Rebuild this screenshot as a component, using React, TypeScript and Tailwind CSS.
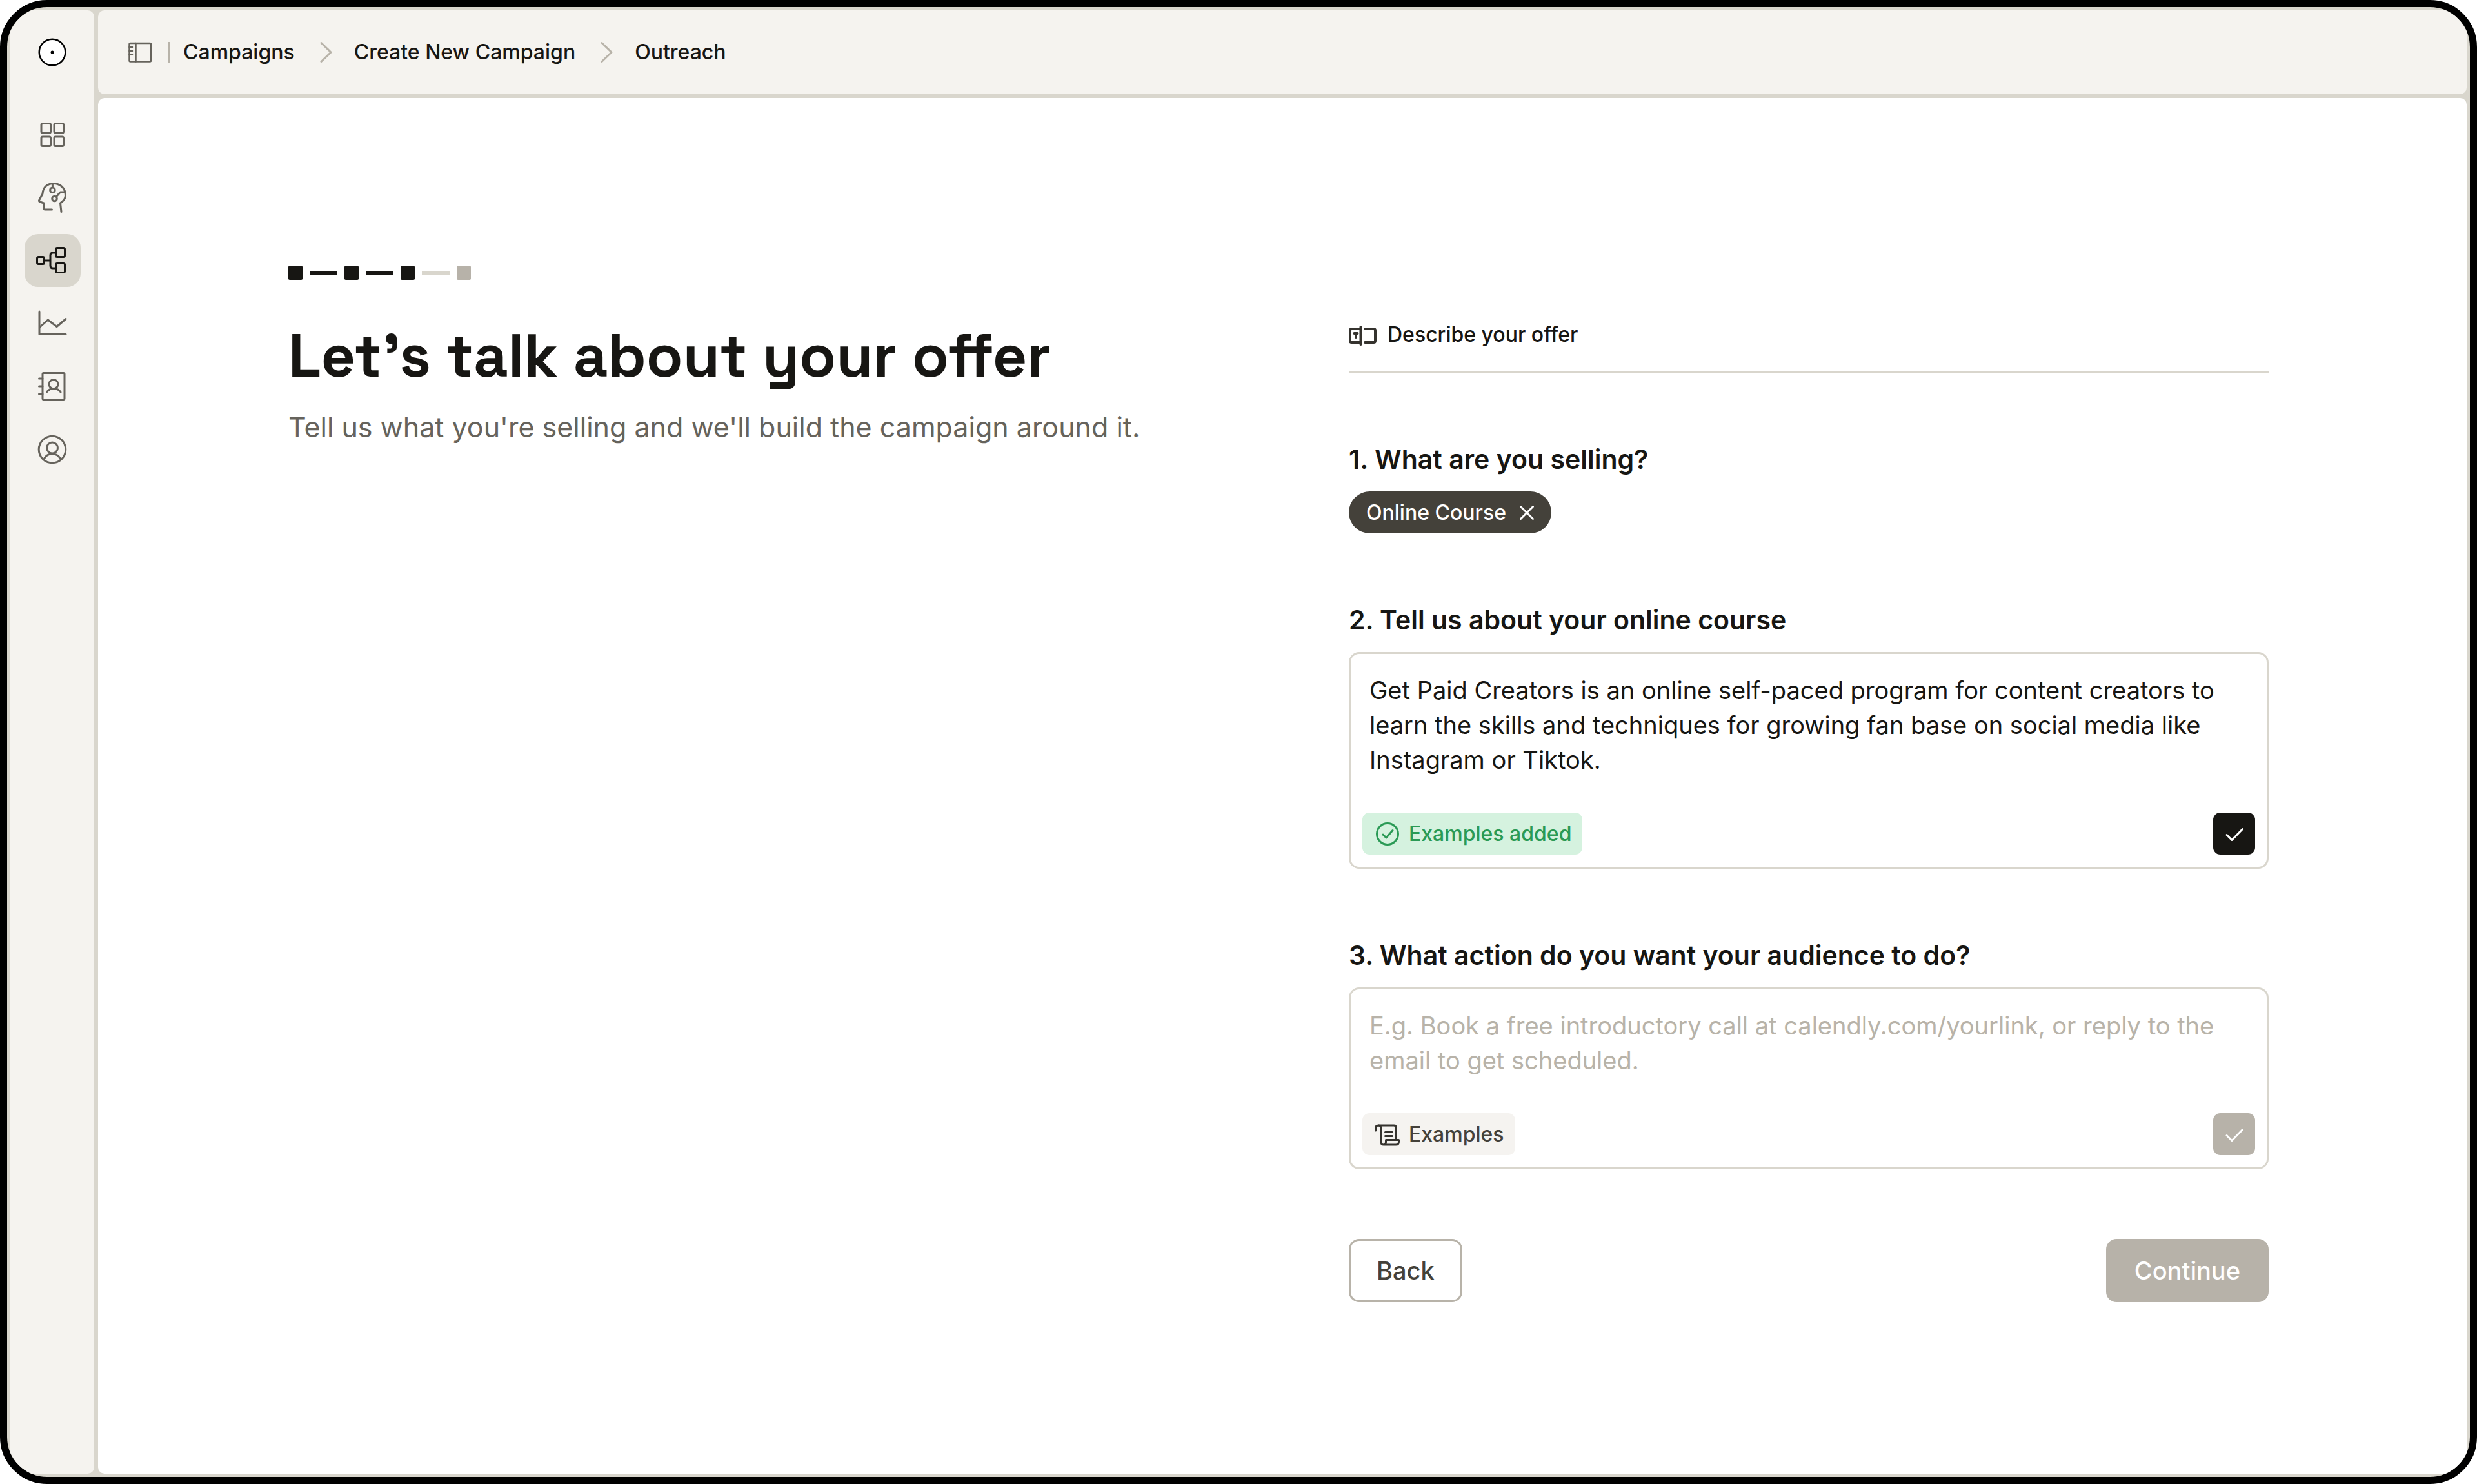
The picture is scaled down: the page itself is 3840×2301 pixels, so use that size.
import type { ReactNode } from "react";

type IconProps = { className?: string; children: ReactNode };

const Icon = ({ className = "", children }: IconProps) => (
  <svg
    xmlns="http://www.w3.org/2000/svg"
    fill="none"
    viewBox="0 0 48 48"
    strokeWidth={3}
    stroke="currentColor"
    strokeLinecap="round"
    strokeLinejoin="round"
    aria-hidden="true"
    className={`size-12 shrink-0 overflow-visible ${className}`}
  >
    {children}
  </svg>
);

const SmallIcon = ({ className = "", children }: IconProps) => (
  <svg
    xmlns="http://www.w3.org/2000/svg"
    fill="none"
    viewBox="0 0 44 44"
    strokeWidth={3}
    stroke="currentColor"
    strokeLinecap="round"
    strokeLinejoin="round"
    aria-hidden="true"
    className={`size-11 shrink-0 ${className}`}
  >
    {children}
  </svg>
);

const navItems = [
  {
    label: "Dashboard",
    icon: (
      <Icon>
        <rect x="7" y="7.5" width="14.5" height="14.5" rx="2" />
        <rect x="27" y="7.5" width="14.5" height="14.5" rx="2" />
        <rect x="7" y="28" width="14.5" height="14.5" rx="2" />
        <rect x="27" y="28" width="14.5" height="14.5" rx="2" />
      </Icon>
    ),
  },
  {
    label: "Intelligence",
    icon: (
      <Icon>
        <path d="M23.5 43H13q-2 0-2-2v-8l-6-2q-2.4-1-1.2-3L9 18.500C9.500 9 16 2.500 26 2.500c10.500 0 18.500 7.500 18.500 18.500 0 5.500-3.500 8.500-8 12L38 46.500" />
        <path d="M24.400 2.500v6.200M30.200 23l6.300-7H44" />
        <circle cx="24.400" cy="12.700" r="3.800" />
        <circle cx="27.500" cy="26" r="3.800" />
      </Icon>
    ),
  },
  {
    label: "Campaigns",
    active: true,
    icon: (
      <Icon>
        <rect x="0.500" y="18.500" width="11" height="11" rx="2" />
        <rect x="29.500" y="4.500" width="14" height="14" rx="2" />
        <rect x="29.500" y="28.500" width="14" height="14" rx="2" />
        <path d="M11.500 24H21M29.500 12H25q-4 0-4 4v16q0 4 4 4h4.500" />
      </Icon>
    ),
  },
  {
    label: "Analytics",
    icon: (
      <Icon>
        <path d="M4 5v35.500h41M5 29l12.300-11L31 28.500 45 16.500" />
      </Icon>
    ),
  },
  {
    label: "Contacts",
    icon: (
      <Icon>
        <rect x="9" y="2.500" width="34" height="41" rx="1.500" />
        <path d="M3.500 11H9M3.500 23H9M3.500 35H9M15.500 32c5-7.500 16.500-7.500 21.500 0" />
        <circle cx="26" cy="19.700" r="7" />
      </Icon>
    ),
  },
  {
    label: "Account",
    icon: (
      <Icon>
        <circle cx="24" cy="23" r="20.800" />
        <circle cx="24" cy="20.500" r="8.500" />
        <path d="M11.200 37.500c5.500-10.500 20-10.500 25.600 0" />
      </Icon>
    ),
  },
];

const Sidebar = () => {
  return (
    <aside className="flex w-[130px] shrink-0 flex-col items-center rounded-[10px] bg-[#f5f3ef] pt-[43px]">
      <a href="#home" aria-label="Home">
        <svg
          xmlns="http://www.w3.org/2000/svg"
          viewBox="0 0 44 44"
          className="size-11"
        >
          <circle
            cx="22"
            cy="22"
            r="20.300"
            fill="white"
            stroke="black"
            strokeWidth={2.5}
          />
          <circle cx="22" cy="22" r="2.500" />
        </svg>
      </a>
      <nav className="mt-16 flex flex-col gap-4">
        {navItems.map((item) => (
          <a
            key={item.label}
            href={`#${item.label.toLowerCase()}`}
            aria-label={item.label}
            className={`flex h-[82px] w-[87px] items-center justify-center rounded-[21px] ${
              item.active ? "bg-[#d9d6cd] text-[#171613]" : "text-[#66635c]"
            }`}
          >
            {item.icon}
          </a>
        ))}
      </nav>
    </aside>
  );
};

const Chevron = () => (
  <SmallIcon className="text-[#b8b3a9]">
    <path d="M17 7.500 32 22 17 36.500" />
  </SmallIcon>
);

const Header = () => {
  return (
    <header className="flex h-[130px] items-center gap-[21px] rounded-[10px] bg-[#f5f3ef] pl-[43px] text-[32px] font-medium text-[#171613]">
      <button type="button" aria-label="Toggle sidebar">
        <SmallIcon className="text-[#66635c]">
          <g strokeWidth={2.5}>
            <rect x="5.500" y="8" width="33.500" height="28.500" rx="1.500" />
            <path d="M15.500 8v28.500M5.500 14H10M5.500 20H10M5.500 25.500H10" />
          </g>
        </SmallIcon>
      </button>
      <div className="h-[33px] w-[3px] bg-[#b8b3a9]" />
      <nav aria-label="Breadcrumb" className="flex items-center gap-6">
        <a href="#campaigns">Campaigns</a>
        <Chevron />
        <a href="#new">Create New Campaign</a>
        <Chevron />
        <a href="#outreach">Outreach</a>
      </nav>
    </header>
  );
};

const Steps = () => {
  return (
    <div className="flex items-center gap-[11px]">
      <span className="size-[22px] rounded-[2px] bg-[#171613]" />
      <span className="h-[6px] w-[43px] bg-[#171613]" />
      <span className="size-[22px] rounded-[2px] bg-[#171613]" />
      <span className="h-[6px] w-[43px] bg-[#171613]" />
      <span className="size-[22px] rounded-[2px] bg-[#171613]" />
      <span className="h-[6px] w-[43px] bg-[#d9d6cd]" />
      <span className="size-[22px] rounded-[2px] bg-[#b7b2a9]" />
    </div>
  );
};

type QuestionProps = {
  id: string;
  label: string;
  rows: number;
  value?: string;
  placeholder?: string;
  done?: boolean;
};

const Question = ({ id, label, rows, value, placeholder, done }: QuestionProps) => {
  return (
    <div className="flex flex-col gap-6">
      <label htmlFor={id} className="text-[41px] leading-[52px] font-semibold">
        {label}
      </label>
      <div className="rounded-2xl border-3 border-[#d9d6cd] pt-[29px] pb-[19px]">
        <textarea
          id={id}
          rows={rows}
          defaultValue={value}
          placeholder={placeholder}
          className="block w-full resize-none overflow-hidden px-[29px] text-[38px] leading-[54px] outline-none placeholder:text-[#b8b3a9]"
        />
        <div className="mt-[55px] flex items-center justify-between px-[18px]">
          <button
            type="button"
            className={`flex h-[65px] items-center gap-[11px] rounded-[11px] px-[17px] text-[32px] font-medium ${
              done ? "bg-[#d5f2df] text-[#2a9a55]" : "bg-[#f5f3f0] text-[#44413a]"
            }`}
          >
            {done ? (
              <SmallIcon>
                <circle cx="22" cy="22" r="16.500" />
                <path d="m15 23 5 5 10-11.500" />
              </SmallIcon>
            ) : (
              <SmallIcon className="text-[#35332e]">
                <path d="M3.500 16v-3.500Q3.500 8 8 8h24q3.500 0 3.500 4v18" />
                <path d="M8 8q4 0 4 4.500V34q0 4 4 4h19q4.500 0 4.500-4.500v-3H19.500V34q0 4-3.500 4" />
                <path d="M18.500 18.500h11M18.500 24.500h11" />
              </SmallIcon>
            )}
            {done ? "Examples added" : "Examples"}
          </button>
          <button
            type="button"
            aria-label="Confirm answer"
            disabled={!done}
            className={`flex size-[65px] items-center justify-center rounded-[11px] text-white ${
              done ? "bg-[#171613]" : "bg-[#b7b2a9]"
            }`}
          >
            <SmallIcon>
              <path d="m10 23.500 8 8L34.500 14.500" />
            </SmallIcon>
          </button>
        </div>
      </div>
    </div>
  );
};

const OfferForm = () => {
  return (
    <form className="flex flex-col gap-[108px] pt-[85px]">
      <div className="flex items-center gap-4 border-b-3 border-[#d9d6cd] pb-[34px] text-[32px] leading-[44px] font-medium">
        <SmallIcon className="text-[#35332e]">
          <g strokeWidth={4}>
            <path d="M18.500 13H4.500q-2.500 0-2.500 2.500v16Q2 34 4.500 34h14M18.500 10v27" />
            <path d="M25 13h13.500q2.500 0 2.500 2.500v16q0 2.500-2.500 2.500H25" />
            <path d="M8.500 20h5M11 20v6" />
          </g>
        </SmallIcon>
        <h2>Describe your offer</h2>
      </div>

      <div className="flex flex-col items-start gap-6">
        <h3 className="text-[41px] leading-[52px] font-semibold">
          1. What are you selling?
        </h3>
        <div className="flex h-[65px] items-center gap-[18px] rounded-full bg-[#44413a] pr-6 pl-[27px] text-[32px] font-medium text-white">
          Online Course
          <button type="button" aria-label="Remove Online Course">
            <svg
              xmlns="http://www.w3.org/2000/svg"
              fill="none"
              viewBox="0 0 28 28"
              strokeWidth={3}
              stroke="currentColor"
              strokeLinecap="round"
              className="size-7"
            >
              <path d="m4.500 4.500 19 19M23.500 4.500l-19 19" />
            </svg>
          </button>
        </div>
      </div>

      <Question
        id="course"
        label="2. Tell us about your online course"
        rows={3}
        value="Get Paid Creators is an online self-paced program for content creators to learn the skills and techniques for growing fan base on social media like Instagram or Tiktok."
        done
      />

      <Question
        id="action"
        label="3. What action do you want your audience to do?"
        rows={2}
        placeholder="E.g. Book a free introductory call at calendly.com/yourlink, or reply to the email to get scheduled."
      />

      <div className="flex items-center justify-between text-[38px] font-medium">
        <button
          type="button"
          className="h-[98px] rounded-2xl border-3 border-[#b8b3a9] px-10 text-[#44413a]"
        >
          Back
        </button>
        <button
          type="submit"
          disabled
          className="h-[98px] rounded-2xl bg-[#b7b2a9] px-11 text-white"
        >
          Continue
        </button>
      </div>
    </form>
  );
};

export default function App() {
  return (
    <div className="min-h-screen bg-white font-['Inter',sans-serif]">
      <div className="flex min-h-screen gap-[6px] overflow-hidden rounded-[73px] border-[11px] border-black bg-[#d9d6cd] p-[5px]">
        <Sidebar />
        <div className="flex flex-1 flex-col gap-[6px]">
          <Header />
          <main className="grid flex-1 grid-cols-2 gap-[218px] rounded-[10px] bg-white pt-[260px] pr-[307px] pb-[200px] pl-[295px] text-[#171613]">
            <section>
              <Steps />
              <h1 className="mt-[58px] font-['Space_Grotesk','Inter',sans-serif] text-[93px] leading-[120px] font-bold">
                Let’s talk about your offer
              </h1>
              <p className="mt-5 text-[43px] leading-[60px] text-[#66635c]">
                Tell us what you're selling and we'll build the campaign around it.
              </p>
            </section>
            <OfferForm />
          </main>
        </div>
      </div>
    </div>
  );
}
